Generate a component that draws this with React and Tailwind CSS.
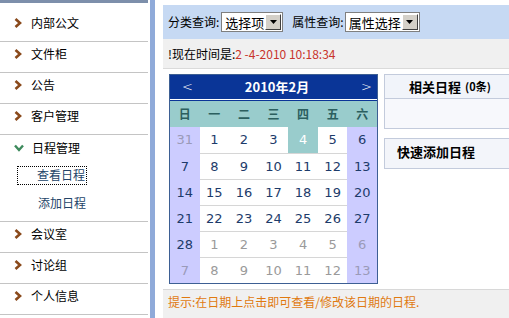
import React from 'react';

const cjk = { fontFamily: '"Noto Sans CJK SC", "Noto Sans", sans-serif' };
const verdana = { fontFamily: '"DejaVu Sans", "Noto Sans CJK SC", sans-serif' };

const Chevron = () => (
  <svg width="8" height="10" viewBox="0 0 8 10" className="shrink-0">
    <polyline points="1.5,1 6,5 1.5,9" fill="none" stroke="#8a4a1c" strokeWidth="2.6" strokeLinejoin="miter" />
  </svg>
);

const Check = () => (
  <svg width="10" height="8" viewBox="0 0 10 8" className="shrink-0">
    <polyline points="1,1.5 5,6 9,1.5" fill="none" stroke="#3d8a5c" strokeWidth="2.4" />
  </svg>
);

const NavItem = ({ label }) => (
  <div className="h-[31px] pb-[6px] flex items-center gap-[9px] pl-[14px] border-b border-[#c4c4c4] text-[12px] text-black">
    <Chevron />
    <span>{label}</span>
  </div>
);

const FakeSelect = ({ label, width }) => (
  <div className={`h-[20px] ${width} bg-white border border-[#7f7f7f] flex items-center justify-between pl-[3px] pr-[1px]`}>
    <span className="text-[13px] leading-none text-black">{label}</span>
    <div className="w-[16px] h-[16px] bg-[#d4d0c8] border border-t-white border-l-white border-r-[#404040] border-b-[#404040] flex items-center justify-center">
      <svg width="7" height="4" viewBox="0 0 7 4"><polygon points="0,0 7,0 3.5,4" fill="#000" /></svg>
    </div>
  </div>
);

// six rows of the month, [day, inMonth]
const weeks = [
  [[31, 0], [1, 1], [2, 1], [3, 1], [4, 1], [5, 1], [6, 1]],
  [[7, 1], [8, 1], [9, 1], [10, 1], [11, 1], [12, 1], [13, 1]],
  [[14, 1], [15, 1], [16, 1], [17, 1], [18, 1], [19, 1], [20, 1]],
  [[21, 1], [22, 1], [23, 1], [24, 1], [25, 1], [26, 1], [27, 1]],
  [[28, 1], [1, 0], [2, 0], [3, 0], [4, 0], [5, 0], [6, 0]],
  [[7, 0], [8, 0], [9, 0], [10, 0], [11, 0], [12, 0], [13, 0]],
];

const Calendar = () => (
  <div className="w-[209px] shrink-0 border border-[#3d5f93] bg-white">
    <div className="h-[24px] bg-[#0a3597] flex items-center justify-between pl-[12px] pr-[5px] text-white">
      <span className="text-[13px] font-light" style={verdana}>&lt;</span>
      <span className="text-[13px] font-bold" style={cjk}>2010年2月</span>
      <span className="text-[13px] font-light" style={verdana}>&gt;</span>
    </div>
    <div className="h-[1px] bg-white" />
    <div className="h-[1px] bg-[#0a3597]" />
    <div className="grid grid-cols-7 h-[26px] bg-[#99cccc] text-[#2c5f5f] font-bold text-[12px]">
      {['日', '一', '二', '三', '四', '五', '六'].map((d) => (
        <div key={d} className="flex items-center justify-center">{d}</div>
      ))}
    </div>
    {weeks.map((week, r) => (
      <div key={r} className="grid grid-cols-7 h-[26px]">
        {week.map(([day, inMonth], c) => {
          const weekend = c === 0 || c === 6;
          const today = r === 0 && c === 4;
          let cls = 'bg-white border-[#d6d6d6]';
          if (weekend) cls = 'bg-[#ccccff] border-[#ccccff]';
          if (today) cls = 'bg-[#99cccc] border-[#99cccc]';
          const color = today ? 'text-white' : inMonth ? 'text-[#1d3b6a]' : weekend ? 'text-[#9a9ab8]' : 'text-[#9a9a9a]';
          return (
            <div
              key={c}
              className={`flex items-center justify-center text-[13px] ${r > 0 ? 'border-t' : ''} ${cls} ${color}`}
              style={verdana}
            >
              {day}
            </div>
          );
        })}
      </div>
    ))}
  </div>
);

export default function App() {
  return (
    <div className="w-[509px] h-[318px] overflow-hidden bg-white flex" style={cjk}>
      {/* left menu */}
      <aside className="w-[150px] shrink-0 flex flex-col">
        <div className="h-[3px] w-[148px] bg-[#7d8fab]" />
        <div className="w-[148px] mt-[8px]">
          <NavItem label="内部公文" />
          <NavItem label="文件柜" />
          <NavItem label="公告" />
          <NavItem label="客户管理" />
          <div className="border-b border-[#c4c4c4] pb-[4px]">
            <div className="h-[26px] flex items-center gap-[8px] pl-[14px] text-[12px] text-black">
              <Check />
              <span>日程管理</span>
            </div>
            <div className="h-[28px] flex items-center pl-[18px]">
              <span className="h-[17px] flex items-center pl-[19px] pr-[1px] outline-1 outline-dotted outline-black text-[12px] text-[#234468]">
                查看日程
              </span>
            </div>
            <div className="h-[28px] flex items-center pl-[38px] text-[12px] text-[#234468]">添加日程</div>
          </div>
          <NavItem label="会议室" />
          <NavItem label="讨论组" />
          <NavItem label="个人信息" />
        </div>
      </aside>
      <div className="w-[5px] shrink-0 bg-[#8faad9]" />

      {/* main content */}
      <main className="w-[354px] shrink-0 pl-[8px] pt-[5px] flex flex-col">
        <div className="h-[36px] bg-[#c6d9f3] flex items-center pl-[5px] text-[12px] text-black">
          <span>分类查询:</span>
          <div className="ml-[2px]">
            <FakeSelect label="选择项" width="w-[62px]" />
          </div>
          <span className="ml-[9px]">属性查询:</span>
          <div className="ml-[1px]">
            <FakeSelect label="属性选择" width="w-[75px]" />
          </div>
        </div>
        <div className="h-[31px] bg-[#f0f0f0] border-b border-[#dadada] flex items-center pl-[5px] text-[12px]">
          <span className="text-black">!现在时间是:</span>
          <span className="text-[#c8332b]">2 -4-2010 10:18:34</span>
        </div>

        <div className="flex gap-[6px] mt-[5px] pl-[6px]">
          <Calendar />
          <div className="w-[132px] shrink-0 flex flex-col gap-[9px]">
            <div className="h-[55px] border border-[#c3cbdc] bg-[#f7f8fc] flex flex-col">
              <div className="h-[24px] border-b border-[#c3cbdc] bg-[#f1f4fa] flex items-center justify-center gap-[4px] text-black font-bold">
                <span className="text-[13px]">相关日程</span>
                <span className="text-[11px]">(0条)</span>
              </div>
              <div className="flex-1" />
            </div>
            <div className="h-[31px] border border-[#c3cbdc] bg-[#f3f5fa] flex items-center pl-[12px] pb-[4px] text-[13px] font-bold text-black">
              快速添加日程
            </div>
          </div>
        </div>

        <div className="mt-[5px] h-[30px] bg-[#f0f0f0] border-t border-[#d8d8d8] flex items-center pl-[5px] pb-[4px] text-[12px] text-[#e07a10]">
          提示:在日期上点击即可查看/修改该日期的日程.
        </div>
      </main>
    </div>
  );
}
